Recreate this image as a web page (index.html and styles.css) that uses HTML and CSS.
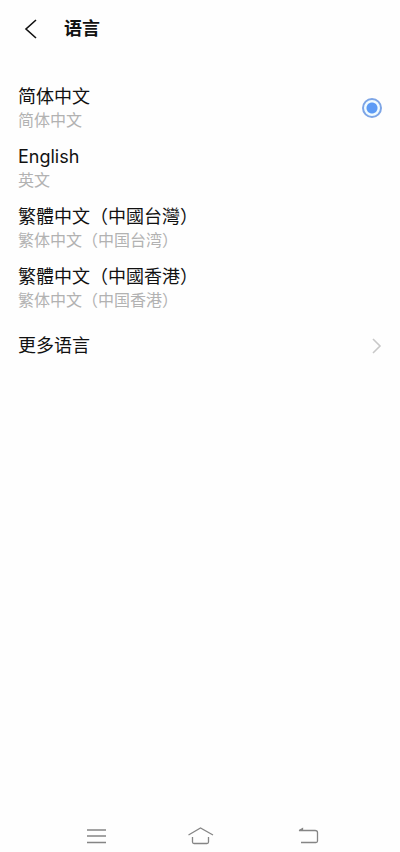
FILE: index.html
```html
<!DOCTYPE html>
<html lang="zh-CN">
<head>
  <meta charset="UTF-8" />
  <meta name="viewport" content="width=device-width, initial-scale=1" />
  <title>语言</title>
  <link rel="stylesheet" href="styles.css">
</head>
<body>
  <header class="top-bar">
    <button class="back-btn" type="button" aria-label="返回">
      <svg width="14" height="20" viewBox="0 0 14 20"><path d="M12 1 L2 10 L12 19" /></svg>
    </button>
    <h1 class="page-title">语言</h1>
  </header>

  <main class="content">
    <form class="language-list">
      <label class="language-row">
        <span class="names">
          <span class="name">简体中文</span>
          <span class="sub-name">简体中文</span>
        </span>
        <input class="choice" type="radio" name="language" value="zh-CN" checked />
      </label>
      <label class="language-row">
        <span class="names">
          <span class="name" lang="en">English</span>
          <span class="sub-name">英文</span>
        </span>
        <input class="choice" type="radio" name="language" value="en" />
      </label>
      <label class="language-row">
        <span class="names">
          <span class="name">繁體中文（中國台灣）</span>
          <span class="sub-name">繁体中文（中国台湾）</span>
        </span>
        <input class="choice" type="radio" name="language" value="zh-TW" />
      </label>
      <label class="language-row">
        <span class="names">
          <span class="name">繁體中文（中國香港）</span>
          <span class="sub-name">繁体中文（中国香港）</span>
        </span>
        <input class="choice" type="radio" name="language" value="zh-HK" />
      </label>
    </form>
    <a class="more-link" href="#more">
      <span class="name">更多语言</span>
      <svg class="chevron" width="10" height="16" viewBox="0 0 10 16"><path d="M1 1 L8 8 L1 15" /></svg>
    </a>
  </main>

  <nav class="nav-bar">
    <button class="nav-btn" type="button" aria-label="最近任务">
      <svg width="26" height="20" viewBox="0 0 26 20"><path d="M4 4 H23 M4 10 H23 M4 16.500 H23" /></svg>
    </button>
    <button class="nav-btn" type="button" aria-label="主页">
      <svg width="26" height="20" viewBox="0 0 26 20"><path d="M0.500 9 L12.500 2 L25 9 M4.500 11 V16 Q4.500 17.500 6 17.500 H19 Q20.500 17.500 20.500 16 V11" /></svg>
    </button>
    <button class="nav-btn" type="button" aria-label="返回上一级">
      <svg width="26" height="20" viewBox="0 0 26 20"><path d="M5 4.500 H21 Q23.500 4.500 23.500 6.500 V15 Q23.500 16.500 22 16.500 H7 M5 4.500 L8.500 2.500 V4.500" /></svg>
    </button>
  </nav>
</body>
</html>
```

FILE: styles.css
```css
* {
  box-sizing: border-box;
}
body {
  margin: 0;
  min-height: 100vh;
  display: flex;
  flex-direction: column;
  background: #fefefe;
  color: #111;
  font-family: Inter, "Noto Sans CJK SC", sans-serif;
  font-size: 18px;
}
button {
  border: none;
  padding: 0;
  background: none;
  cursor: pointer;
}
svg {
  display: block;
  fill: none;
}
.top-bar {
  display: flex;
  align-items: center;
  gap: 26px;
  height: 58px;
  padding: 0 24px;
}
.back-btn svg {
  stroke: #111;
  stroke-width: 1.6;
}
.page-title {
  margin: 0;
  font-size: 18px;
  font-weight: 700;
  line-height: 24px;
}
.content {
  flex: 1;
  padding-top: 20px;
}
.language-row,
.more-link {
  display: flex;
  align-items: center;
  justify-content: space-between;
  height: 60px;
  padding: 0 18px;
  cursor: pointer;
}
.more-link {
  height: 56px;
  color: inherit;
  text-decoration: none;
}
.name,
.sub-name {
  display: block;
}
.name {
  line-height: 24px;
}
.sub-name {
  color: #b2b2b2;
  font-size: 16px;
  line-height: 22px;
}
/* only the selected language shows its ring */
.choice {
  appearance: none;
  width: 20px;
  height: 20px;
  margin: 0;
  border: 2px solid transparent;
  border-radius: 50%;
}
.choice:checked {
  border-color: #7da5e6;
  background: radial-gradient(circle, #5d9bf5 5px, #f0fbff 6px);
}
.chevron {
  stroke: #c8c8c8;
  stroke-width: 1.6;
}
.nav-bar {
  display: grid;
  grid-template-columns: repeat(3, 1fr);
  height: 32px;
  padding: 0 40px 0 43px;
}
.nav-btn {
  display: flex;
  align-items: center;
  justify-content: center;
}
.nav-btn svg {
  stroke: #858585;
  stroke-width: 1.3;
}
```
